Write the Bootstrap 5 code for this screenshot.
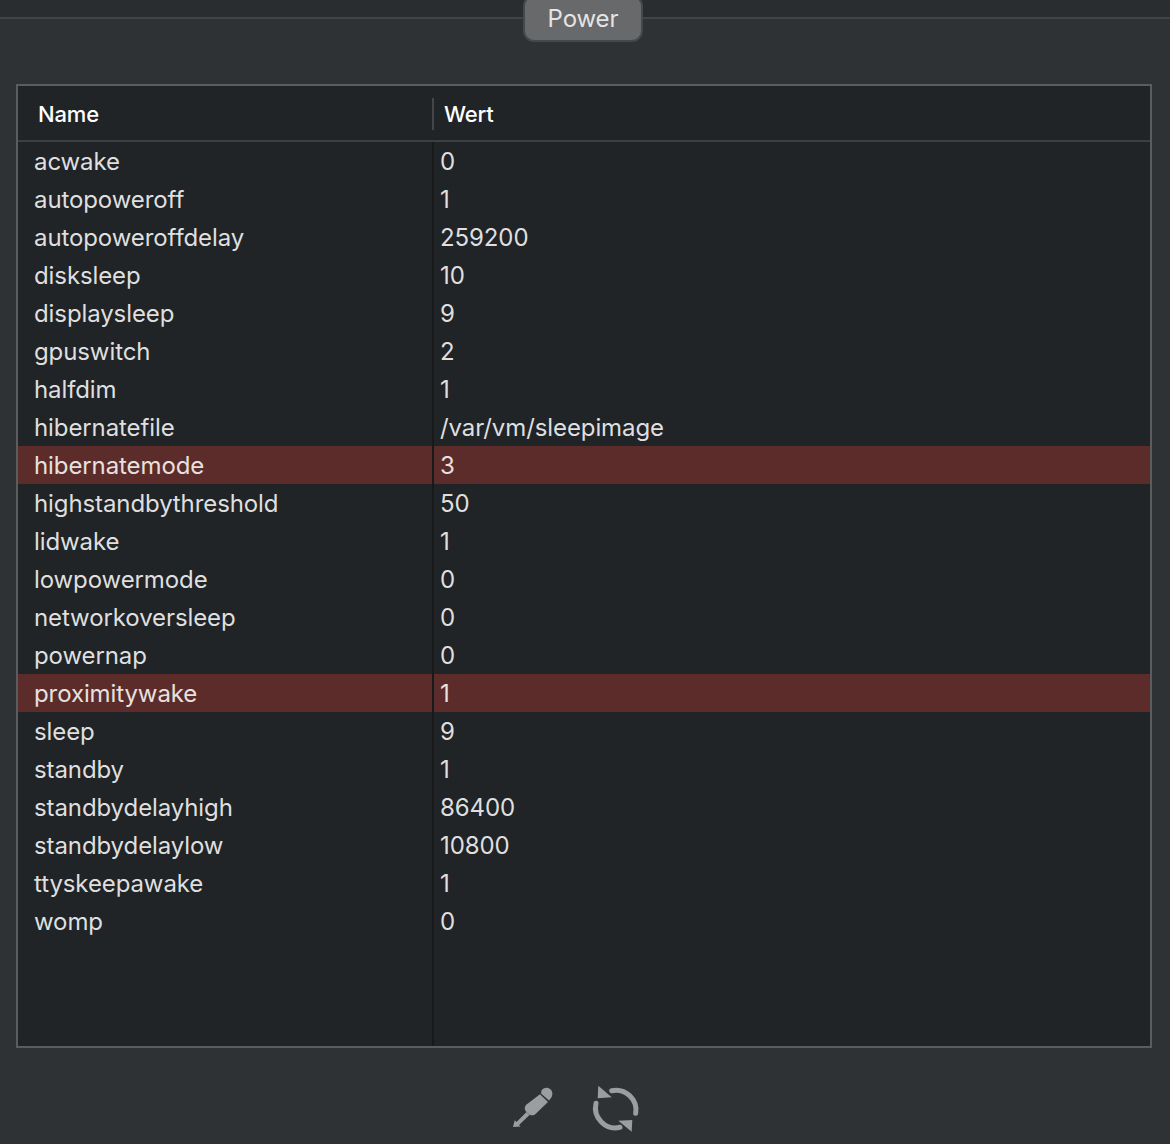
<!DOCTYPE html>
<html lang="de">
<head>
<meta charset="utf-8">
<title>Power</title>
<link href="https://cdn.jsdelivr.net/npm/bootstrap@5.3.0/dist/css/bootstrap.min.css" rel="stylesheet">
<style>
html,body{height:100%}
body{background:#2f3235;font-family:Inter,"Liberation Sans",sans-serif;color:#dcdcdc;font-size:24px;letter-spacing:-.1px;overflow:hidden}
.topstrip{height:19px;background:#2a2d30;border-bottom:2px solid #414446}
.pill{top:-5px;left:523px;width:120px;height:47px;background:#67696b;border:2px solid #46484a;border-radius:11px;color:#e4e4e4;font-size:24px;padding-top:4px}
.tablebox{margin:65px 18px 0 16px;border:2px solid #5a5c5e;background:#202427;width:1136px;height:964px}
.ptable{width:1132px;table-layout:fixed;border-collapse:separate;border-spacing:0;margin:0;--bs-table-bg:transparent;--bs-table-color:#dcdcdc}
.ptable th,.ptable td{padding:0;border:0;background:transparent;color:#dfdfdf;font-weight:400;line-height:36px;height:38px;white-space:nowrap}
.ptable tbody td{padding-top:2px;vertical-align:top}
.ptable thead th{height:56px;padding-top:2px;color:#fff;font-weight:500;font-size:22px;letter-spacing:-.15px;border-bottom:2px solid #3d4042;vertical-align:middle;line-height:32px}
.ptable thead th .hcell{display:block;padding-left:20px}
.ptable thead th + th .hcell{border-left:2px solid #43464a;padding-left:10px}
.ptable tbody td:first-child{padding-left:16px}
.ptable tbody td+td{padding-left:6px;border-left:2px solid #17191b}
.ptable col.c1{width:414px}
.ptable tr.hot td{background:#5c2c2b;color:#e8e0df}
.ptable tr.filler td{height:106px}
.toolbar{gap:34px;margin-top:36px;margin-left:-18px}
.toolbar svg{display:block}
</style>
</head>
<body>
<div class="topstrip position-relative">
  <div class="pill position-absolute text-center">Power</div>
</div>
<div class="tablebox">
<table class="table ptable">
<colgroup><col class="c1"><col></colgroup>
<thead><tr><th><span class="hcell">Name</span></th><th><span class="hcell">Wert</span></th></tr></thead>
<tbody>
<tr><td>acwake</td><td>0</td></tr>
<tr><td>autopoweroff</td><td>1</td></tr>
<tr><td>autopoweroffdelay</td><td>259200</td></tr>
<tr><td>disksleep</td><td>10</td></tr>
<tr><td>displaysleep</td><td>9</td></tr>
<tr><td>gpuswitch</td><td>2</td></tr>
<tr><td>halfdim</td><td>1</td></tr>
<tr><td>hibernatefile</td><td>/var/vm/sleepimage</td></tr>
<tr class="hot"><td>hibernatemode</td><td>3</td></tr>
<tr><td>highstandbythreshold</td><td>50</td></tr>
<tr><td>lidwake</td><td>1</td></tr>
<tr><td>lowpowermode</td><td>0</td></tr>
<tr><td>networkoversleep</td><td>0</td></tr>
<tr><td>powernap</td><td>0</td></tr>
<tr class="hot"><td>proximitywake</td><td>1</td></tr>
<tr><td>sleep</td><td>9</td></tr>
<tr><td>standby</td><td>1</td></tr>
<tr><td>standbydelayhigh</td><td>86400</td></tr>
<tr><td>standbydelaylow</td><td>10800</td></tr>
<tr><td>ttyskeepawake</td><td>1</td></tr>
<tr><td>womp</td><td>0</td></tr>
<tr class="filler"><td></td><td></td></tr>
</tbody>
</table>
</div>
<div class="toolbar d-flex justify-content-center align-items-center">
<svg width="46" height="46" viewBox="0 0 46 46" aria-hidden="true"><g fill="#9b9d9f"><path d="M31 6.500 L31.500 3.500 C33.500 0.500 37.500 0 40 2 C43 4 43 8.500 41 11 L39 13.500 Z"/><path d="M30 7.300 L38 15 L25 27.500 C22.500 29 20 28.500 18 26.500 L16 24.500 C14 22 14.500 19.500 16.500 17.500 Z"/><path d="M3 40 L4.700 33.300 L6.500 35 L16.500 25 L19.500 28 L9 38 L10.500 39.500 Z"/></g></svg>
<svg width="52" height="52" viewBox="0 0 52 52" aria-hidden="true"><g fill="none" stroke="#9b9d9f" stroke-width="5" stroke-linecap="round"><path d="M21.700 6.700 A20 20 0 0 1 45.700 29.300"/><path d="M6 19.300 A20 20 0 0 0 30 43.300"/></g><g fill="#9b9d9f"><path d="M8.300 1.700 L7.700 14.300 L21.700 13.300 Z"/><path d="M41.700 47.700 L42.300 36 L28.300 36.700 Z"/></g></svg>
</div>
</body>
</html>
